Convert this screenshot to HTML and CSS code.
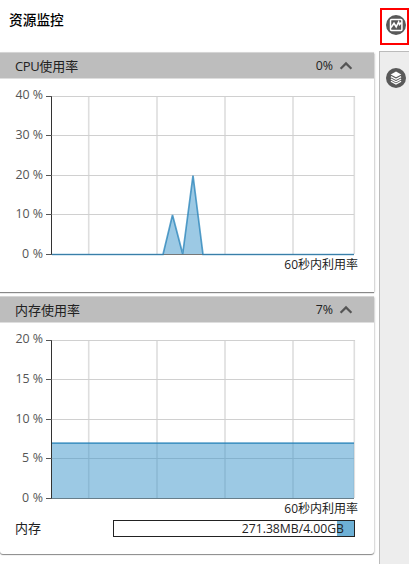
FILE: index.html
```html
<!DOCTYPE html>
<html lang="zh-CN">
<head>
<meta charset="utf-8">
<title>资源监控</title>
<link rel="stylesheet" href="styles.css">
</head>
<body>
<main class="monitor">
  <h1 class="title">资源监控</h1>
  <section class="card">
    <header class="card-head">
      <span class="name"><span class="latin">CPU</span>使用率</span><span class="value">0%</span>
      <svg class="chevron" width="14" height="10" viewBox="0 0 14 10"><path d="M1.6 7.8 7 2.4l5.4 5.4"/></svg>
    </header>
    <svg class="chart" width="374" height="180" viewBox="0 78 374 180">
      <path class="grid-v" d="M88.7 96V254M157 96V254M225 96V254M293 96V254M354.3 96V254"/>
      <path class="grid" d="M52 96.5H355M52 135.5H354M52 175.5H354M52 214.5H354"/>
      <path class="baseline" d="M52 254.5H354"/>
      <path class="area" d="M52 254 163 254 172.5 215 182.7 254 193 175.5 203 254H354"/>
      <path class="line" d="M52 254.5H163L172.5 215 182.7 254 193 175.5 203 254.5H354"/>
      <path class="axis" d="M51.5 96V255"/>
      <path class="ticks" d="M46 96.5H52M46 135.5H52M46 175.5H52M46 214.5H52M46 254.5H52"/>
      <g class="labels">
        <text x="15.5" y="99" textLength="27.5">40 %</text><text x="15.5" y="139" textLength="27.5">30 %</text>
        <text x="15.5" y="178.5" textLength="27.5">20 %</text><text x="15.5" y="218" textLength="27.5">10 %</text>
        <text x="22" y="257.5" textLength="21">0 %</text>
      </g>
    </svg>
    <p class="caption">60秒内利用率</p>
  </section>
  <section class="card memory">
    <header class="card-head">
      <span class="name">内存使用率</span><span class="value">7%</span>
      <svg class="chevron" width="14" height="10" viewBox="0 0 14 10"><path d="M1.6 7.8 7 2.4l5.4 5.4"/></svg>
    </header>
    <svg class="chart" width="374" height="180" viewBox="0 322 374 180">
      <path class="grid-v" d="M88.7 340V498M157 340V498M225 340V498M293 340V498M354.3 340V498"/>
      <path class="grid" d="M52 340.5H355M52 379.5H354M52 419.5H354M52 458.5H354"/>
      <path class="baseline" d="M52 498.5H354"/>
      <path class="area" d="M52 443H354V498.5H52Z"/>
      <path class="line" d="M52 443.2H354"/>
      <path class="axis" d="M51.5 340V499"/>
      <path class="ticks" d="M46 340.5H52M46 379.5H52M46 419.5H52M46 458.5H52M46 498.5H52"/>
      <g class="labels">
        <text x="15.5" y="343" textLength="27.5">20 %</text><text x="15.5" y="383" textLength="27.5">15 %</text>
        <text x="15.5" y="422.5" textLength="27.5">10 %</text><text x="22" y="462" textLength="21">5 %</text>
        <text x="22" y="501.5" textLength="21">0 %</text>
      </g>
    </svg>
    <p class="caption">60秒内利用率</p>
    <div class="usage"><span>内存</span><div class="meter">271.38MB/4.00GB</div></div>
  </section>
</main>
<nav class="rail">
  <div class="tab active">
    <svg width="20" height="20" viewBox="0 0 20 20"><circle cx="10" cy="10" r="10" fill="#595959"/><rect x="4.5" y="4.5" width="11.4" height="11" rx="1" fill="none" stroke="#fff" stroke-width="1.5"/><path d="M5 12.5 8 8.3l2.2 3.5L12.6 7l.9 2.5 2-2" fill="none" stroke="#fff" stroke-width="1.6"/></svg>
  </div>
  <div class="tab layers">
    <svg width="20" height="20" viewBox="0 0 20 20"><circle cx="10" cy="10" r="10" fill="#595959"/><path d="M10 3.5 15.3 6.4 10 9.3 4.7 6.4Z" fill="#fff"/><path d="M4.9 8.6 10 11.3l5.1-2.7M4.9 11 10 13.7l5.1-2.7M4.9 13.3 10 16l5.1-2.7" fill="none" stroke="#fff" stroke-width="1.3"/></svg>
  </div>
</nav>
</body>
</html>
```
FILE: styles.css
```css
* { box-sizing: border-box; }
body {
  margin: 0;
  width: 409px;
  height: 564px;
  display: flex;
  overflow: hidden;
  background: #fff;
  color: #222;
  font: 400 13px/18px "Open Sans", "Noto Sans CJK SC", sans-serif;
}
.monitor { width: 379px; }
.title {
  height: 53px;
  margin: 0;
  padding: 10px 0 0 9px;
  font-size: 13.7px;
  line-height: 20px;
  font-weight: 500;
  color: #000;
}
.card {
  width: 374px;
  height: 239px;
  margin-bottom: 5px;
  background: #fff;
  box-shadow: 0 1px 1px #888, 1px 0 2px #ddd;
}
.memory { height: 257px; border-radius: 0 0 3px 3px; }
.card-head {
  height: 25px;
  display: flex;
  align-items: center;
  padding: 0 21px 0 15px;
  background: #bdbdbd;
  box-shadow: 0 1px #dedede, 0 -1px #d5d5d5;
}
.name { flex: 1; }
.latin { letter-spacing: -.4px; }
.value { font-size: 12.4px; margin-right: 6px; }
.chevron { fill: none; stroke: #555; stroke-width: 2.2; }
.chart { display: block; margin-bottom: -2px; overflow: visible; }
.grid { stroke: #d0d0d0; }
.grid-v { stroke: #dedede; stroke-width: 1.6; }
.baseline { stroke: #777; }
.area { fill: #3a94c9; fill-opacity: .5; }
.line { fill: none; stroke: #2682b8; stroke-opacity: .75; stroke-width: 1.7; }
.axis { stroke: #333; }
.ticks { stroke: #555; }
.labels { fill: #555; font-size: 12.4px; }
.caption {
  margin: 0;
  padding-right: 16px;
  text-align: right;
  font-size: 12px;
  line-height: 18px;
}
.usage {
  display: flex;
  align-items: center;
  padding: 1px 19px 0 15px;
}
.usage span { width: 98px; }
.meter {
  width: 242px;
  height: 17px;
  padding-right: 10px;
  border: 1px solid #222;
  background: linear-gradient(#6db0d5, #6db0d5) right / 17px 100% no-repeat;
  text-align: right;
  font-size: 12.2px;
  line-height: 15px;
}
.rail { width: 30px; }
.tab { display: flex; justify-content: center; }
.active {
  width: 29px;
  height: 37px;
  margin: 8px 0 6px 1px;
  padding-top: 5px;
  padding-left: 2px;
  border: 2px solid #f00;
}
.layers {
  height: 513px;
  padding: 16px 0 0 3px;
  border: solid #bbb;
  border-width: 1px 0 0 1px;
  background: #ededed;
}
```
